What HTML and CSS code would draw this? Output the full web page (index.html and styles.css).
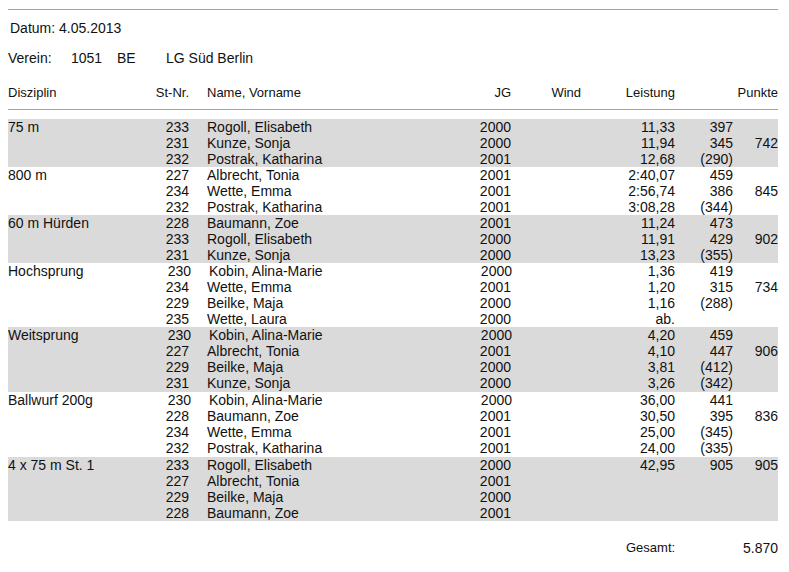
FILE: index.html
```html
<!DOCTYPE html>
<html lang="de">
<head>
<meta charset="utf-8">
<title>Mannschaftsergebnis</title>
<link rel="stylesheet" href="styles.css">
</head>
<body>
<div class="page">
  <div class="rule"></div>
  <div class="datum">Datum: 4.05.2013</div>
  <div class="verein">
    <span class="v-label">Verein:</span>
    <span class="v-nr">1051</span>
    <span class="v-lv">BE</span>
    <span class="v-name">LG Süd Berlin</span>
  </div>
  <div class="row head">
    <span class="c-disc">Disziplin</span>
    <span class="c-num">St-Nr.</span>
    <span class="c-name">Name, Vorname</span>
    <span class="c-jg">JG</span>
    <span class="c-wind">Wind</span>
    <span class="c-perf">Leistung</span>
    <span class="c-pts-head">Punkte</span>
  </div>
  <div class="rule rule-head"></div>

  <div class="groups">
    <div class="grp alt">
      <div class="row"><span class="c-disc">75 m</span><span class="c-num">233</span><span class="c-name">Rogoll, Elisabeth</span><span class="c-jg">2000</span><span class="c-wind"></span><span class="c-perf">11,33</span><span class="c-pts">397</span><span class="c-team"></span></div>
      <div class="row"><span class="c-disc"></span><span class="c-num">231</span><span class="c-name">Kunze, Sonja</span><span class="c-jg">2000</span><span class="c-wind"></span><span class="c-perf">11,94</span><span class="c-pts">345</span><span class="c-team">742</span></div>
      <div class="row"><span class="c-disc"></span><span class="c-num">232</span><span class="c-name">Postrak, Katharina</span><span class="c-jg">2001</span><span class="c-wind"></span><span class="c-perf">12,68</span><span class="c-pts">(290)</span><span class="c-team"></span></div>
    </div>
    <div class="grp">
      <div class="row"><span class="c-disc">800 m</span><span class="c-num">227</span><span class="c-name">Albrecht, Tonia</span><span class="c-jg">2001</span><span class="c-wind"></span><span class="c-perf">2:40,07</span><span class="c-pts">459</span><span class="c-team"></span></div>
      <div class="row"><span class="c-disc"></span><span class="c-num">234</span><span class="c-name">Wette, Emma</span><span class="c-jg">2001</span><span class="c-wind"></span><span class="c-perf">2:56,74</span><span class="c-pts">386</span><span class="c-team">845</span></div>
      <div class="row"><span class="c-disc"></span><span class="c-num">232</span><span class="c-name">Postrak, Katharina</span><span class="c-jg">2001</span><span class="c-wind"></span><span class="c-perf">3:08,28</span><span class="c-pts">(344)</span><span class="c-team"></span></div>
    </div>
    <div class="grp alt">
      <div class="row"><span class="c-disc">60 m Hürden</span><span class="c-num">228</span><span class="c-name">Baumann, Zoe</span><span class="c-jg">2001</span><span class="c-wind"></span><span class="c-perf">11,24</span><span class="c-pts">473</span><span class="c-team"></span></div>
      <div class="row"><span class="c-disc"></span><span class="c-num">233</span><span class="c-name">Rogoll, Elisabeth</span><span class="c-jg">2000</span><span class="c-wind"></span><span class="c-perf">11,91</span><span class="c-pts">429</span><span class="c-team">902</span></div>
      <div class="row"><span class="c-disc"></span><span class="c-num">231</span><span class="c-name">Kunze, Sonja</span><span class="c-jg">2000</span><span class="c-wind"></span><span class="c-perf">13,23</span><span class="c-pts">(355)</span><span class="c-team"></span></div>
    </div>
    <div class="grp">
      <div class="row nudge"><span class="c-disc">Hochsprung</span><span class="c-num">230</span><span class="c-name">Kobin, Alina-Marie</span><span class="c-jg">2000</span><span class="c-wind"></span><span class="c-perf">1,36</span><span class="c-pts">419</span><span class="c-team"></span></div>
      <div class="row"><span class="c-disc"></span><span class="c-num">234</span><span class="c-name">Wette, Emma</span><span class="c-jg">2001</span><span class="c-wind"></span><span class="c-perf">1,20</span><span class="c-pts">315</span><span class="c-team">734</span></div>
      <div class="row"><span class="c-disc"></span><span class="c-num">229</span><span class="c-name">Beilke, Maja</span><span class="c-jg">2000</span><span class="c-wind"></span><span class="c-perf">1,16</span><span class="c-pts">(288)</span><span class="c-team"></span></div>
      <div class="row"><span class="c-disc"></span><span class="c-num">235</span><span class="c-name">Wette, Laura</span><span class="c-jg">2000</span><span class="c-wind"></span><span class="c-perf">ab.</span><span class="c-pts"></span><span class="c-team"></span></div>
    </div>
    <div class="grp alt tall">
      <div class="row nudge"><span class="c-disc">Weitsprung</span><span class="c-num">230</span><span class="c-name">Kobin, Alina-Marie</span><span class="c-jg">2000</span><span class="c-wind"></span><span class="c-perf">4,20</span><span class="c-pts">459</span><span class="c-team"></span></div>
      <div class="row"><span class="c-disc"></span><span class="c-num">227</span><span class="c-name">Albrecht, Tonia</span><span class="c-jg">2001</span><span class="c-wind"></span><span class="c-perf">4,10</span><span class="c-pts">447</span><span class="c-team">906</span></div>
      <div class="row"><span class="c-disc"></span><span class="c-num">229</span><span class="c-name">Beilke, Maja</span><span class="c-jg">2000</span><span class="c-wind"></span><span class="c-perf">3,81</span><span class="c-pts">(412)</span><span class="c-team"></span></div>
      <div class="row"><span class="c-disc"></span><span class="c-num">231</span><span class="c-name">Kunze, Sonja</span><span class="c-jg">2000</span><span class="c-wind"></span><span class="c-perf">3,26</span><span class="c-pts">(342)</span><span class="c-team"></span></div>
    </div>
    <div class="grp tall">
      <div class="row nudge"><span class="c-disc">Ballwurf 200g</span><span class="c-num">230</span><span class="c-name">Kobin, Alina-Marie</span><span class="c-jg">2000</span><span class="c-wind"></span><span class="c-perf">36,00</span><span class="c-pts">441</span><span class="c-team"></span></div>
      <div class="row"><span class="c-disc"></span><span class="c-num">228</span><span class="c-name">Baumann, Zoe</span><span class="c-jg">2001</span><span class="c-wind"></span><span class="c-perf">30,50</span><span class="c-pts">395</span><span class="c-team">836</span></div>
      <div class="row"><span class="c-disc"></span><span class="c-num">234</span><span class="c-name">Wette, Emma</span><span class="c-jg">2001</span><span class="c-wind"></span><span class="c-perf">25,00</span><span class="c-pts">(345)</span><span class="c-team"></span></div>
      <div class="row"><span class="c-disc"></span><span class="c-num">232</span><span class="c-name">Postrak, Katharina</span><span class="c-jg">2001</span><span class="c-wind"></span><span class="c-perf">24,00</span><span class="c-pts">(335)</span><span class="c-team"></span></div>
    </div>
    <div class="grp alt">
      <div class="row"><span class="c-disc">4 x 75 m St. 1</span><span class="c-num">233</span><span class="c-name">Rogoll, Elisabeth</span><span class="c-jg">2000</span><span class="c-wind"></span><span class="c-perf">42,95</span><span class="c-pts">905</span><span class="c-team">905</span></div>
      <div class="row"><span class="c-disc"></span><span class="c-num">227</span><span class="c-name">Albrecht, Tonia</span><span class="c-jg">2001</span><span class="c-wind"></span><span class="c-perf"></span><span class="c-pts"></span><span class="c-team"></span></div>
      <div class="row"><span class="c-disc"></span><span class="c-num">229</span><span class="c-name">Beilke, Maja</span><span class="c-jg">2000</span><span class="c-wind"></span><span class="c-perf"></span><span class="c-pts"></span><span class="c-team"></span></div>
      <div class="row"><span class="c-disc"></span><span class="c-num">228</span><span class="c-name">Baumann, Zoe</span><span class="c-jg">2001</span><span class="c-wind"></span><span class="c-perf"></span><span class="c-pts"></span><span class="c-team"></span></div>
    </div>
  </div>

  <div class="row total">
    <span class="c-total-label">Gesamt:</span>
    <span class="c-total-value">5.870</span>
  </div>
</div>
</body>
</html>
```

FILE: styles.css
```css
html, body {
  margin: 0;
  padding: 0;
  background: #ffffff;
}

body {
  font-family: "Liberation Sans", Arial, sans-serif;
  font-size: 14px;
  line-height: 16px;
  color: #111111;
}

.page {
  width: 770px;
  margin: 9px 0 0 8px;
}

.rule {
  height: 0;
  border-top: 1px solid #a3a3a3;
}

.datum {
  margin-top: 10px;
  padding-left: 2px;
}

.verein {
  margin-top: 14px;
  display: flex;
}

.v-label { width: 63px; }
.v-nr { width: 46px; }
.v-lv { width: 49px; }

.row {
  display: grid;
  grid-template-columns: 142px 43px 267px 52px 69px 94px 58px 45px;
  height: 16px;
  white-space: nowrap;
}

.head {
  margin-top: 19px;
  font-size: 13px;
}

.rule-head {
  margin-top: 8px;
}

.groups {
  margin-top: 9px;
}

.grp.alt {
  background: #dadada;
}

.grp.tall {
  padding-bottom: 1px;
}

.c-num {
  text-align: right;
  padding-right: 4px;
}

.c-name {
  padding-left: 14px;
}

.c-jg {
  text-align: right;
  padding-right: 1px;
}

.c-wind,
.c-perf,
.c-pts,
.c-team {
  text-align: right;
}

.c-pts-head {
  grid-column: 7 / 9;
  text-align: right;
}

.nudge .c-num { padding-right: 2px; }
.nudge .c-name { padding-left: 16px; }
.nudge .c-jg { padding-right: 0; }

.total {
  margin-top: 19px;
}

.c-total-label {
  grid-column: 6 / 7;
  font-size: 13px;
  padding-left: 45px;
}

.c-total-value {
  grid-column: 7 / 9;
  text-align: right;
}
```
